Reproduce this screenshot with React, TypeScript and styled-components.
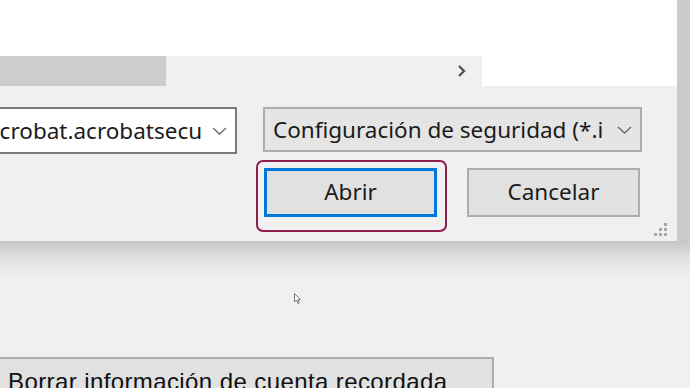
import React from "react";
import styled, { createGlobalStyle } from "styled-components";

const GlobalStyle = createGlobalStyle`
  html, body {
    margin: 0;
    padding: 0;
    background: #f0f0f0;
    overflow: hidden;
  }
  #root {
    width: 690px;
    height: 388px;
  }
`;

const Page = styled.div`
  position: relative;
  width: 690px;
  height: 388px;
  background: #f0f0f0;
  overflow: hidden;
  font-family: "Noto Sans", "Open Sans", sans-serif;
  color: #1b1b1b;
`;

const Dialog = styled.div`
  display: flex;
  flex-direction: column;
  width: 677px;
  height: 241px;
  background: #f0f0f0;
  box-shadow: 13px 0 0 0 #cbcbcb;
`;

const FileList = styled.div`
  height: 56px;
  background: #ffffff;
`;

const ScrollRow = styled.div`
  display: flex;
  height: 30px;
`;

const Track = styled.div`
  display: flex;
  align-items: center;
  width: 482px;
  background: #f0f0f0;
`;

const Thumb = styled.div`
  width: 166px;
  height: 100%;
  background: #cdcdcd;
  margin-right: auto;
`;

const ArrowBtn = styled.div`
  display: flex;
  align-items: center;
  justify-content: center;
  width: 40px;
  height: 100%;
`;

const Corner = styled.div`
  flex: 1;
  background: #ffffff;
`;

const Body = styled.div`
  position: relative;
  flex: 1;
  padding-top: 21px;
`;

const ComboRow = styled.div`
  display: flex;
  align-items: flex-start;
  gap: 26px;
`;

const Combo = styled.div<{ $width: number; $height: number; $tone: "light" | "grey"; $shift?: number }>`
  display: flex;
  align-items: center;
  gap: 10px;
  box-sizing: border-box;
  width: ${(p) => p.$width}px;
  height: ${(p) => p.$height}px;
  margin-left: ${(p) => p.$shift ?? 0}px;
  padding: 0 8px 0 8px;
  border: 2px solid ${(p) => (p.$tone === "light" ? "#7a7a7a" : "#adadad")};
  background: ${(p) => (p.$tone === "light" ? "#ffffff" : "#e5e5e5")};
  font-size: 22.5px;
  overflow: hidden;
`;

const ComboText = styled.span`
  flex: 1;
  white-space: nowrap;
  overflow: hidden;
`;

const ButtonRow = styled.div`
  display: flex;
  align-items: flex-start;
  margin-top: 6px;
  padding-left: 256px;
`;

const FocusRing = styled.div`
  padding: 6px 8px 13px 6px;
  border: 2px solid #8c1d4d;
  border-radius: 7px;
`;

const DialogButton = styled.div<{ $focused?: boolean }>`
  display: flex;
  align-items: center;
  justify-content: center;
  box-sizing: border-box;
  width: 173px;
  height: 49px;
  background: #e1e1e1;
  border: ${(p) => (p.$focused ? "3px solid #0078d7" : "2px solid #adadad")};
  font-size: 22.5px;
  padding-bottom: 2px;
`;

const SecondaryWrap = styled.div`
  padding-top: 8px;
  margin-left: 20px;
`;

const Grip = styled.svg`
  position: absolute;
  right: 9px;
  bottom: 4px;
`;

const Shade = styled.div`
  height: 36px;
  background: linear-gradient(#c6c6c6, #dedede 40%, #f0f0f0);
`;

const Cursor = styled.svg`
  position: absolute;
  left: 294px;
  top: 293px;
`;

const WideButton = styled.div`
  position: absolute;
  left: 0;
  top: 357px;
  box-sizing: border-box;
  width: 494px;
  height: 40px;
  padding: 11px 0 0 8px;
  background: #e1e1e1;
  border: 2px solid #adadad;
  border-left: none;
  font-family: "Liberation Sans", Arial, sans-serif;
  font-size: 24px;
  line-height: 24px;
  letter-spacing: 0.4px;
  color: #111;
  white-space: nowrap;
`;

const Chevron = () => (
  <svg width="15" height="8" viewBox="0 0 15 8">
    <path d="M1 1 L7.5 7 L14 1" fill="none" stroke="#666" strokeWidth="1.3" />
  </svg>
);

const GRIP_DOTS = [
  [10, 0],
  [5, 5],
  [10, 5],
  [0, 10],
  [5, 10],
  [10, 10],
];

export default function App() {
  return (
    <Page>
      <GlobalStyle />
      <Dialog>
        <FileList />
        <ScrollRow>
          <Track>
            <Thumb />
            <ArrowBtn>
              <svg width="10" height="12" viewBox="0 0 10 12">
                <path d="M2 1 L7 6 L2 11" fill="none" stroke="#555" strokeWidth="2.4" />
              </svg>
            </ArrowBtn>
          </Track>
          <Corner />
        </ScrollRow>
        <Body>
          <ComboRow>
            <Combo $width={260} $height={47} $tone="light" $shift={-23}>
              <ComboText>acrobat.acrobatsecurity</ComboText>
              <Chevron />
            </Combo>
            <Combo $width={379} $height={45} $tone="grey">
              <ComboText>Configuración de seguridad (*.i</ComboText>
              <Chevron />
            </Combo>
          </ComboRow>
          <ButtonRow>
            <FocusRing>
              <DialogButton $focused>Abrir</DialogButton>
            </FocusRing>
            <SecondaryWrap>
              <DialogButton>Cancelar</DialogButton>
            </SecondaryWrap>
          </ButtonRow>
          <Grip width="14" height="14" viewBox="0 0 14 14">
            {GRIP_DOTS.map(([x, y]) => (
              <rect key={`${x}-${y}`} x={x} y={y} width="3" height="3" fill="#a8a8a8" />
            ))}
          </Grip>
        </Body>
      </Dialog>
      <Shade />
      <Cursor width="8" height="12" viewBox="0 0 8 12">
        <path d="M0.5 0.5 L0.5 9 L2.5 7 L4 10.5 L5.2 10 L3.8 6.8 L6.5 6.8 Z" fill="#fff" stroke="#555" strokeWidth="0.8" />
      </Cursor>
      <WideButton>Borrar información de cuenta recordada</WideButton>
    </Page>
  );
}
